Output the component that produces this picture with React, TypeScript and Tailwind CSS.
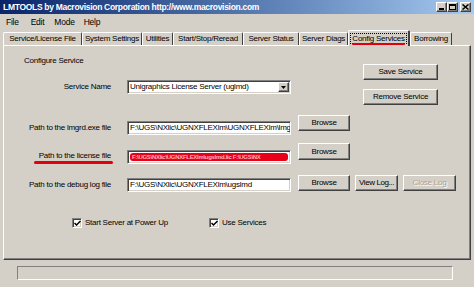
import React from "react";

const btn =
  "bg-[#D4D0C8] border border-t-white border-l-white border-r-[#404040] border-b-[#404040] shadow-[inset_-1px_-1px_0_#808080,inset_1px_1px_0_#D4D0C8] flex items-center justify-center text-black whitespace-nowrap";
const sunken =
  "bg-white border border-t-[#808080] border-l-[#808080] border-r-white border-b-white shadow-[inset_1px_1px_0_#404040,inset_-1px_-1px_0_#D4D0C8]";

function Check() {
  return (
    <div className={`${sunken} w-[10px] h-[10px] flex items-center justify-center`}>
      <svg width="7" height="7" viewBox="0 0 7 7">
        <path d="M0.5 3 L2.5 5 L6.5 1" stroke="#000" strokeWidth="1.5" fill="none" />
      </svg>
    </div>
  );
}

const tabs: [string, number][] = [
  ["Service/License File", 79],
  ["System Settings", 60],
  ["Utilities", 31],
  ["Start/Stop/Reread", 70],
  ["Server Status", 56],
  ["Server Diags", 49],
  ["Config Services", 62],
  ["Borrowing", 42],
];

export default function App() {
  return (
    <div className="w-[474px] h-[287px] bg-[#D4D0C8] font-['Liberation_Sans',Arial,sans-serif] text-[8px] tracking-[-0.25px] leading-[10px] text-black overflow-hidden flex flex-col whitespace-nowrap">
      {/* title bar */}
      <div className="h-[14px] bg-gradient-to-r from-[#0A246A] to-[#A6CAF0] flex items-center pl-[3px] pr-[3px]">
        <span className="text-white font-bold text-[8.5px] tracking-[-0.3px]">
          LMTOOLS by Macrovision Corporation http://www.macrovision.com
        </span>
        <div className="ml-auto flex items-center">
          <div className={`${btn} w-[11px] h-[10px]`}>
            <div className="w-[5px] h-[2px] bg-black mt-[4px]" />
          </div>
          <div className={`${btn} w-[11px] h-[10px]`}>
            <div className="w-[7px] h-[6px] border border-black border-t-2" />
          </div>
          <div className={`${btn} w-[11px] h-[10px] ml-[2px]`}>
            <svg width="7" height="6" viewBox="0 0 7 6">
              <path d="M0.5 0.5 L6.5 5.5 M6.5 0.5 L0.5 5.5" stroke="#000" strokeWidth="1.5" />
            </svg>
          </div>
        </div>
      </div>
      {/* menu */}
      <div className="h-[15px] flex items-center text-[8.5px]">
        <span className="ml-[6px]">File</span>
        <span className="ml-[12px]">Edit</span>
        <span className="ml-[10px]">Mode</span>
        <span className="ml-[9px]">Help</span>
      </div>
      {/* tabs */}
      <div className="h-[16px] flex items-end pl-[3px] relative z-10">
        {tabs.map(([t, w]) => {
          const sel = t === "Config Services";
          return sel ? (
            <div
              key={t}
              style={{ width: w }}
              className="h-[16px] -mb-[1px] bg-[#D4D0C8] border-l border-t border-white border-r-2 border-r-[#404040] rounded-t-[2px] flex flex-col items-center justify-center relative"
            >
              <span className="border border-dotted border-black px-[1px] leading-[9px]">{t}</span>
              <div className="absolute left-[3px] right-[3px] bottom-[1px] h-[2px] bg-[#E00010] rounded-full" />
            </div>
          ) : (
            <div
              key={t}
              style={{ width: w }}
              className="h-[13px] border-l border-t border-white border-r border-r-[#404040] rounded-t-[2px] flex items-center justify-center"
            >
              {t}
            </div>
          );
        })}
      </div>
      {/* panel */}
      <div className="ml-[3px] w-[468px] h-[215px] border border-t-white border-l-white border-r-[#404040] border-b-[#404040] shadow-[inset_-1px_-1px_0_#808080] flex flex-col">
        {/* top section */}
        <div className="flex">
          <div className="w-[359px] flex flex-col">
            <div className="mt-[10px] ml-[20px]">Configure Service</div>
            <div className="mt-[14px] flex items-center">
              <div className="w-[107px] text-right">Service Name</div>
              <div className={`${sunken} ml-[16px] w-[164px] h-[14px] flex items-center`}>
                <span className="pl-[2px] flex-1 overflow-hidden">Unigraphics License Server (uglmd)</span>
                <div className={`${btn} w-[11px] h-[10px] mr-[1px]`}>
                  <svg width="5" height="3" viewBox="0 0 5 3">
                    <path d="M0 0 H5 L2.5 3 Z" fill="#000" />
                  </svg>
                </div>
              </div>
            </div>
          </div>
          <div className="flex flex-col pt-[18px]">
            <div className={`${btn} w-[75px] h-[16px]`}>Save Service</div>
            <div className={`${btn} w-[75px] h-[16px] mt-[9px]`}>Remove Service</div>
          </div>
        </div>
        {/* lmgrd row */}
        <div className="flex items-start mt-[10px]">
          <div className="w-[107px] mt-[6px] h-[14px] leading-[14px] text-right">Path to the lmgrd.exe file</div>
          <div className={`${sunken} ml-[16px] mt-[6px] w-[164px] h-[14px] leading-[12px] pl-[2px] overflow-hidden`}>
            F:\UGS\NXlic\UGNXFLEXlm\UGNXFLEXlm\lmgrd
          </div>
          <div className={`${btn} ml-[7px] w-[52px] h-[16px]`}>Browse</div>
        </div>
        {/* license row */}
        <div className="flex items-start mt-[8px]">
          <div className="w-[107px] mt-[7px] h-[14px] leading-[12px] text-right relative">
            Path to the license file
            <div className="absolute left-[30px] right-[-2px] top-[11px] h-[3px] bg-[#E00010] rounded-full" />
          </div>
          <div className={`${sunken} ml-[16px] mt-[7px] w-[164px] h-[14px] p-[2px]`}>
            <div className="w-full h-full bg-[#E8001A] rounded-[3px] flex items-center overflow-hidden pl-[2px]">
              <span className="text-[6px] leading-[6px] text-white/70 font-bold tracking-[-0.3px]">
                F:\UGS\NXlic\UGNXFLEXlm\ugslmd.lic F:\UGS\NX
              </span>
            </div>
          </div>
          <div className={`${btn} ml-[7px] w-[52px] h-[17px]`}>Browse</div>
        </div>
        {/* debug row */}
        <div className="flex items-start mt-[11px]">
          <div className="w-[107px] mt-[3px] h-[14px] leading-[14px] text-right">Path to the debug log file</div>
          <div className={`${sunken} ml-[16px] mt-[3px] w-[164px] h-[14px] leading-[12px] pl-[2px] overflow-hidden`}>
            F:\UGS\NXlic\UGNXFLEXlm\ugslmd
          </div>
          <div className={`${btn} ml-[7px] w-[52px] h-[16px]`}>Browse</div>
          <div className={`${btn} ml-[5px] w-[43px] h-[16px] tracking-[-0.4px]`}>View Log...</div>
          <div className={`${btn} ml-[5px] w-[53px] h-[16px]`}>
            <span className="text-[#A8A49C] [text-shadow:1px_1px_0_#fff]">Close Log</span>
          </div>
        </div>
        {/* checkboxes */}
        <div className="flex items-center mt-[26px]">
          <div className="ml-[68px]"><Check /></div>
          <span className="ml-[3px] w-[124px]">Start Server at Power Up</span>
          <Check />
          <span className="ml-[3px]">Use Services</span>
        </div>
      </div>
      {/* status bar */}
      <div className="mt-[6px] ml-[17px] w-[436px] h-[14px] border border-t-[#808080] border-l-[#808080] border-r-white border-b-white" />
    </div>
  );
}
